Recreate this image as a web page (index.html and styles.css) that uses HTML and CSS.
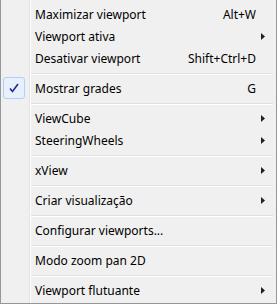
FILE: index.html
```html
<!DOCTYPE html>
<html>
<head>
	<title>Menu de viewport</title>
	<link rel="stylesheet" href="styles.css">
</head>
<body>
	<div class="menu">
		<div class="item"><span class="icon"></span><span class="label">Maximizar viewport</span><span class="key">Alt+W</span></div>
		<div class="item"><span class="icon"></span><span class="label">Viewport ativa</span><span class="arrow"><svg width="4" height="7" viewBox="0 0 4 7"><polygon points="0,0 4,3.5 0,7" fill="#222"/></svg></span></div>
		<div class="item"><span class="icon"></span><span class="label">Desativar viewport</span><span class="key">Shift+Ctrl+D</span></div>
		<div class="sep"></div>
		<div class="item"><span class="icon"><span class="check"><svg width="12" height="12" viewBox="0 0 12 12"><path d="M2 6.5 L4.5 9.5 L10 2" fill="none" stroke="#1b2a9b" stroke-width="1.6"/></svg></span></span><span class="label">Mostrar grades</span><span class="key">G</span></div>
		<div class="sep"></div>
		<div class="item"><span class="icon"></span><span class="label">ViewCube</span><span class="arrow"><svg width="4" height="7" viewBox="0 0 4 7"><polygon points="0,0 4,3.5 0,7" fill="#222"/></svg></span></div>
		<div class="item"><span class="icon"></span><span class="label">SteeringWheels</span><span class="arrow"><svg width="4" height="7" viewBox="0 0 4 7"><polygon points="0,0 4,3.5 0,7" fill="#222"/></svg></span></div>
		<div class="sep"></div>
		<div class="item"><span class="icon"></span><span class="label">xView</span><span class="arrow"><svg width="4" height="7" viewBox="0 0 4 7"><polygon points="0,0 4,3.5 0,7" fill="#222"/></svg></span></div>
		<div class="sep"></div>
		<div class="item"><span class="icon"></span><span class="label">Criar visualização</span><span class="arrow"><svg width="4" height="7" viewBox="0 0 4 7"><polygon points="0,0 4,3.5 0,7" fill="#222"/></svg></span></div>
		<div class="sep"></div>
		<div class="item"><span class="icon"></span><span class="label">Configurar viewports...</span></div>
		<div class="sep"></div>
		<div class="item"><span class="icon"></span><span class="label">Modo zoom pan 2D</span></div>
		<div class="sep"></div>
		<div class="item"><span class="icon"></span><span class="label">Viewport flutuante</span><span class="arrow"><svg width="4" height="7" viewBox="0 0 4 7"><polygon points="0,0 4,3.5 0,7" fill="#222"/></svg></span></div>
	</div>
</body>
</html>
```

FILE: styles.css
```css
body {
	margin: 0;
	background-color: #f0f0f0;
}
.menu {
	width: 277px;
	height: 304px;
	box-sizing: border-box;
	border: 1px solid #979797;
	border-top: none;
	padding: 3px 2px 2px 2px;
	font-family: "Noto Sans", sans-serif;
	font-size: 12px;
	color: #000;
	background: linear-gradient(to right, #f0f0f0 29px, #e2e3e3 29px, #e2e3e3 30px, #fff 30px, #fff 31px, #f0f0f0 31px);
	background-origin: border-box;
}
.item {
	display: flex;
	align-items: center;
	height: 22px;
}
.icon {
	width: 32px;
	height: 22px;
	flex: none;
}
.check {
	display: flex;
	align-items: center;
	justify-content: center;
	width: 20px;
	height: 20px;
	border: 1px solid #aecff7;
	border-radius: 3px;
	background-color: #e8f1fb;
}
.label {
	flex: 1;
	white-space: nowrap;
}
.key {
	padding-right: 18px;
	white-space: nowrap;
}
.arrow {
	display: flex;
	padding-right: 9px;
}
.sep {
	height: 8px;
	margin: 0 1px 0 28px;
	background: linear-gradient(to bottom, transparent 4px, #e0e0e0 4px, #e0e0e0 5px, #fff 5px, #fff 6px, transparent 6px);
}
```
